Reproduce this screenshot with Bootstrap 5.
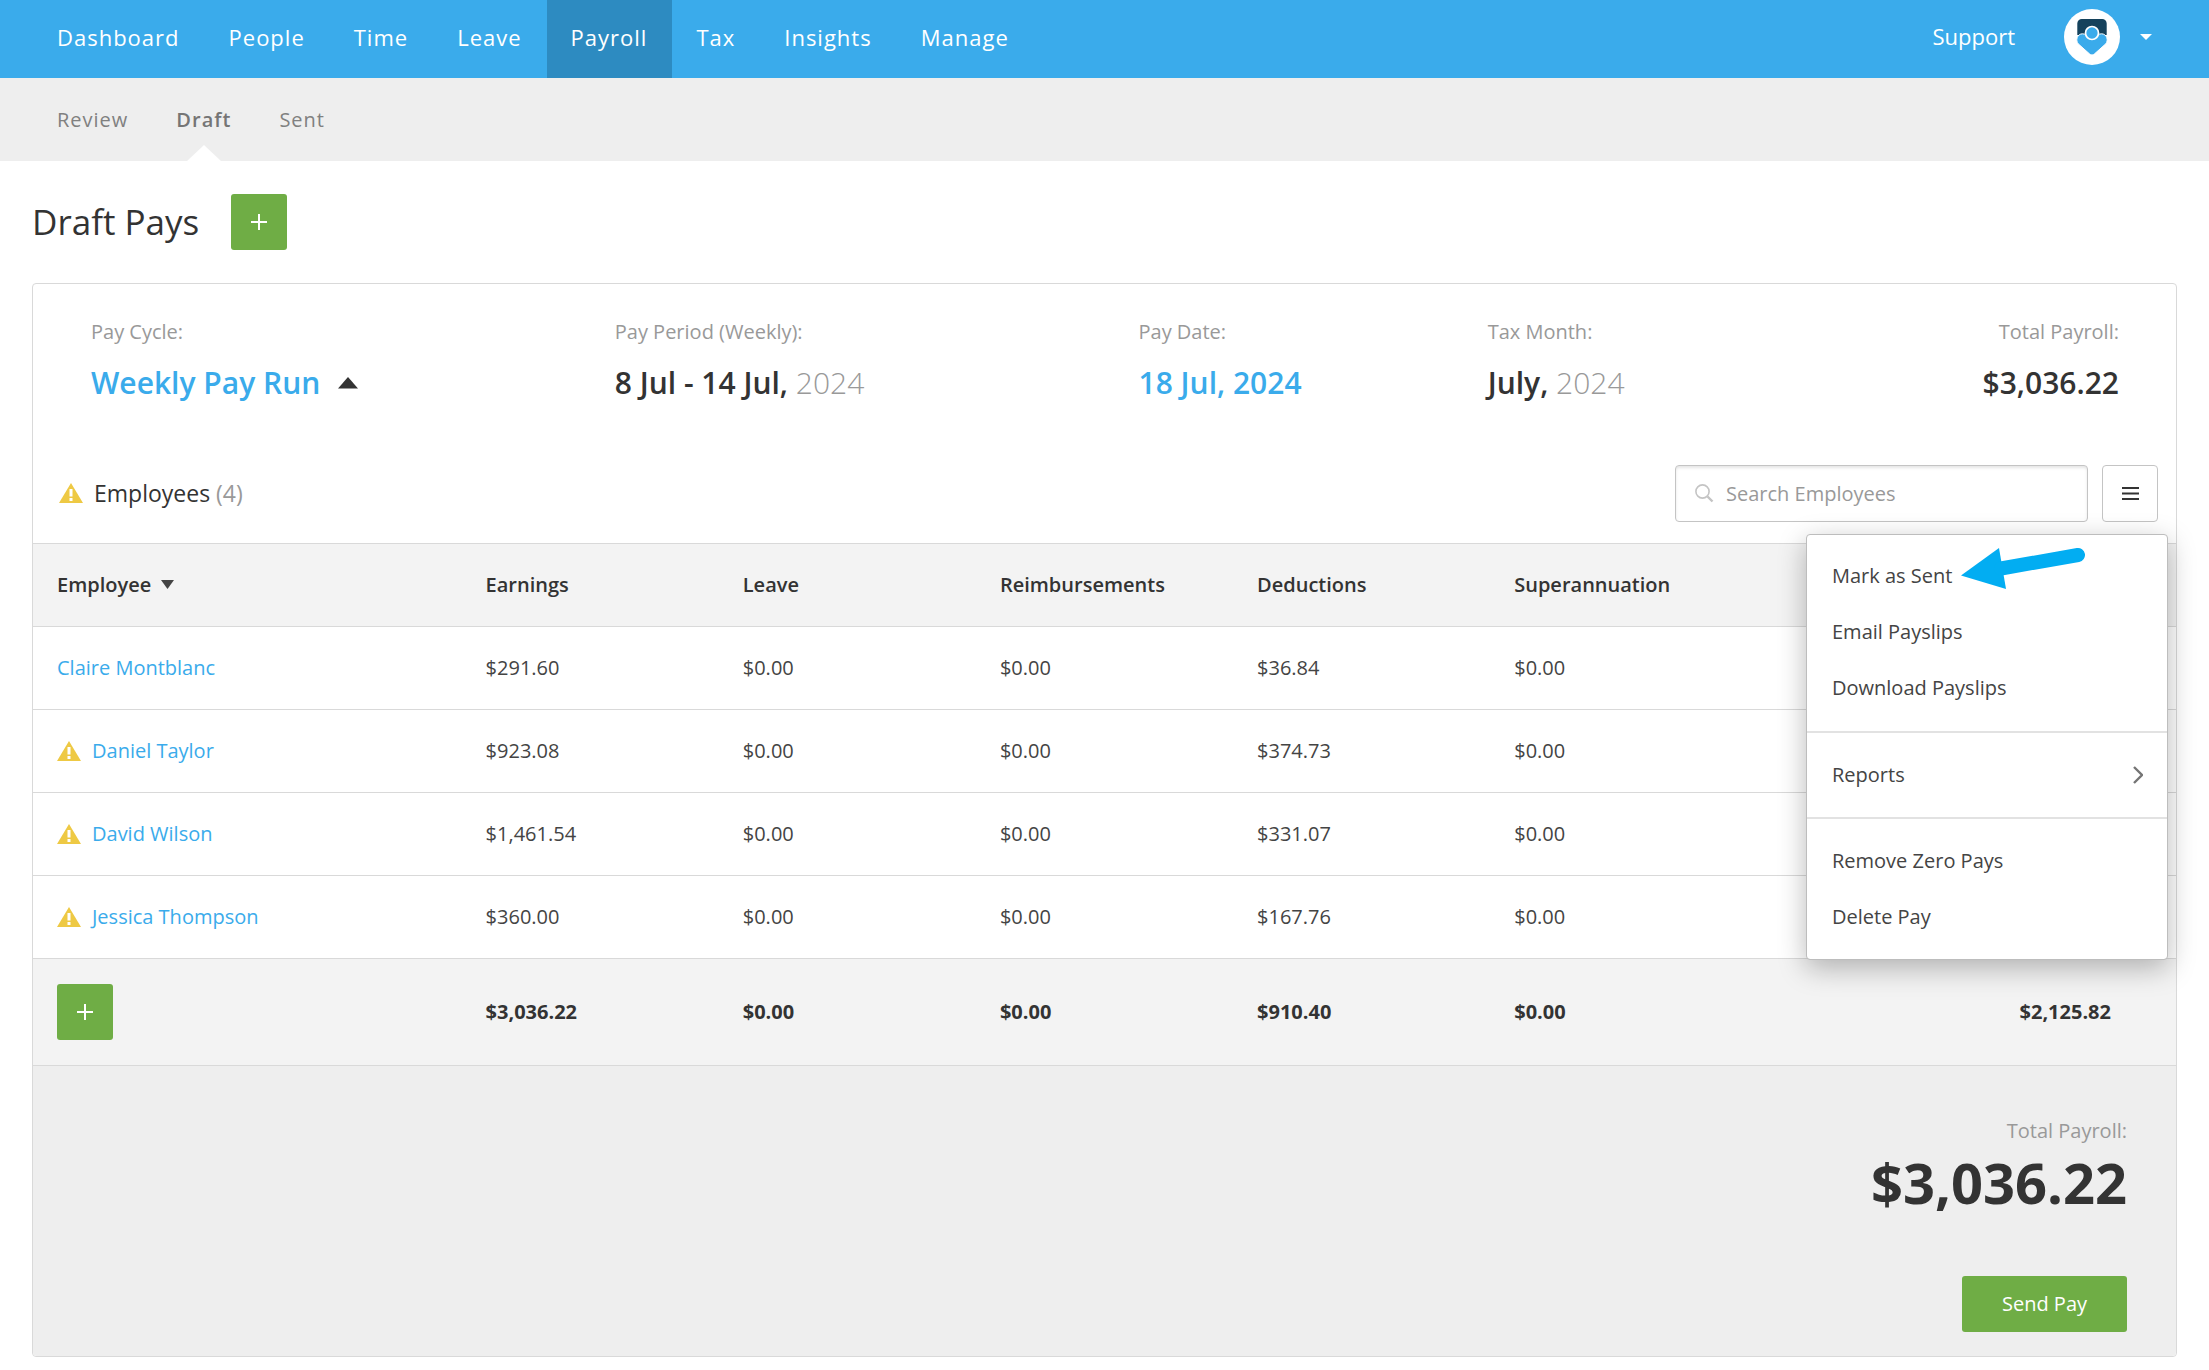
<!DOCTYPE html>
<html lang="en">
<head>
<meta charset="utf-8">
<meta name="viewport" content="width=device-width, initial-scale=1">
<title>Draft Pays</title>
<link href="https://cdn.jsdelivr.net/npm/bootstrap@5.3.0/dist/css/bootstrap.min.css" rel="stylesheet">
<style>
  :root { --sky: #3aabeb; --leaf: #6fad45; --ink: #333; --line: #d9d9d9; --soft: #999; }
  body { font-family: "Open Sans", "Noto Sans", sans-serif; font-size: 20px; line-height: 28px; color: var(--ink); background: #fff; }
  a { color: var(--sky); text-decoration: none; }
  .topbar { background: var(--sky); height: 78px; padding: 0 57px 0 33px; }
  .topbar .nav-link { color: #fff; font-size: 22px; letter-spacing: 1px; padding: 23px 25px 27px 24px; }
  .topbar .nav-link.active { background: #2d8bc1; }
  .topbar .support { color: #fff; font-size: 22px; margin-right: 49px; padding-bottom: 2px; }
  .avatar { width: 56px; height: 56px; }
  .user-toggle { gap: 20px; }
  .subbar { background: #eee; padding: 0 33px; }
  .subbar .nav-link { color: #808080; letter-spacing: 1px; padding: 28px 24px 27px; position: relative; }
  .subbar .nav-link.active { font-weight: 600; color: #757575; }
  .subbar .nav-link.active::after { content: ""; position: absolute; bottom: 0; left: 50%; margin-left: -17px; border: 17px solid transparent; border-top: 0; border-bottom: 16px solid #fff; }
  .page-main { padding: 33px 32px 13px; }
  .title-row { gap: 32px; }
  .page-title { font-size: 35px; line-height: 56px; font-weight: 400; }
  .btn-leaf, .btn-leaf:hover { background: var(--leaf); color: #fff; border: 0; border-radius: 3px; height: 56px; font-size: 20px; line-height: 28px; }
  .btn-plus { width: 56px; }
  .pay-card { border: 1px solid var(--line); border-radius: 4px; margin-top: 33px; }
  .pay-info { padding: 34px 24px 40px; }
  .pay-info .info-cell { padding: 0 33px 0 34px; }
  .label-soft { color: var(--soft); }
  .info-value { font-size: 30px; line-height: 42px; font-weight: 600; margin-top: 16px; }
  .info-value .year { font-weight: 300; color: var(--soft); }
  .info-value svg { margin-left: 18px; }
  .tools { padding: 21px 18px 21px 26px; gap: 14px; }
  .tools h2 { font-size: 23px; line-height: 32px; font-weight: 400; gap: 11px; padding-bottom: 2px; }
  .search-box { width: 413px; }
  .search-box input { height: 57px; border: 1px solid #c4c4c4; border-radius: 4px; padding: 0 16px 0 50px; font-size: 20px; box-shadow: inset 0 2px 3px rgba(0,0,0,.1); }
  .search-box input::placeholder { color: var(--soft); opacity: 1; }
  .search-box svg { left: 20px; top: 19px; }
  .btn-menu { width: 56px; height: 57px; border: 1px solid #c4c4c4; border-radius: 4px; background: #fff; }
  .action-menu { width: 362px; top: 69px; right: -10px; border: 1px solid #bdbdbd; border-radius: 4px; padding: 0; box-shadow: 0 8px 28px rgba(0,0,0,.28); font-size: 20px; }
  .menu-part { padding: 13px 0 15px; }
  .menu-part + .menu-part { border-top: 2px solid #e2e2e2; padding: 14px 0; }
  .action-menu .dropdown-item { color: #444; padding: 14px 24px 14px 25px; line-height: 28px; }
  .pointer { left: 154px; top: 11px; pointer-events: none; }
  .pay-table { --bs-table-color: var(--ink); margin: 0; table-layout: fixed; border-color: var(--line); }
  .pay-table > :not(caption) > * > * { padding: 27px 24px; border-bottom: 1px solid var(--line); vertical-align: middle; line-height: 28px; }
  .pay-table > thead > tr > th { background: #f3f3f3; border-top: 1px solid var(--line); font-weight: 600; }
  .pay-table > tbody > tr > td { color: #444; }
  .pay-table > tfoot > tr > td { background: #f3f3f3; font-weight: 700; padding-top: 25px; padding-bottom: 25px; }
  .pay-table > tfoot > tr > td:last-child { text-align: right; padding-right: 65px; }
  .c-name { width: 20%; } .c-sum { width: 12%; }
  .sort-mark { margin: 0 0 3px 5px; }
  .warned { gap: 11px; }
  .summary { background: #eee; padding: 51px 49px 24px; border-radius: 0 0 4px 4px; }
  .grand-total { font-size: 56px; line-height: 64px; font-weight: 700; margin: 5px 0 62px; }
  .btn-send { width: 165px; font-weight: 500; }
</style>
</head>
<body>
<svg class="d-none" aria-hidden="true">
  <symbol id="warn" viewBox="0 0 24 20"><path d="M12 0 24 20H0z" fill="#eec944"/><path d="M10.500 6h3v7.500h-3zM10.500 15h3v3h-3z" fill="#fff"/></symbol>
  <symbol id="plus" viewBox="0 0 16 16"><path d="M8 0v16M0 8h16" stroke="#fff" stroke-width="2" fill="none"/></symbol>
</svg>

<header class="topbar d-flex align-items-center justify-content-between">
  <nav class="nav" aria-label="Main">
    <a class="nav-link" href="#">Dashboard</a>
    <a class="nav-link" href="#">People</a>
    <a class="nav-link" href="#">Time</a>
    <a class="nav-link" href="#">Leave</a>
    <a class="nav-link active" href="#" aria-current="page">Payroll</a>
    <a class="nav-link" href="#">Tax</a>
    <a class="nav-link" href="#">Insights</a>
    <a class="nav-link" href="#">Manage</a>
  </nav>
  <div class="d-flex align-items-center pb-1">
    <a class="support" href="#">Support</a>
    <button class="user-toggle btn p-0 border-0 d-flex align-items-center" type="button" aria-label="Account menu">
      <svg class="avatar" viewBox="0 0 56 56" aria-hidden="true">
        <circle cx="28" cy="28" r="28" fill="#fff"/>
        <path d="M13.300 26V14.500a4.500 4.500 0 0 1 4.500-4.500h20.400a4.500 4.500 0 0 1 4.500 4.500V26z" fill="#15425c"/>
        <path d="M14.200 34.800c-2.800-3.200-1.300-9.900 4.300-10 3.200 0 5.500 2.200 9.500 5 4-2.800 6.300-5 9.500-5 5.600.1 7.100 6.800 4.300 10L30.600 44.800c-1.700 1.600-3.500 1.600-5.200 0z" fill="#3aabeb" stroke="#fff" stroke-width="1"/>
        <circle cx="28" cy="24" r="6.500" fill="#3aabeb" stroke="#fff" stroke-width="1.700"/>
      </svg>
      <svg width="12" height="6" viewBox="0 0 12 6" aria-hidden="true"><path d="M0 0h12L6 6z" fill="#fff"/></svg>
    </button>
  </div>
</header>

<nav class="subbar nav" aria-label="Payroll">
  <a class="nav-link" href="#">Review</a>
  <a class="nav-link active" href="#" aria-current="page">Draft</a>
  <a class="nav-link" href="#">Sent</a>
</nav>

<main class="page-main">
  <div class="title-row d-flex align-items-center">
    <h1 class="page-title mb-0">Draft Pays</h1>
    <button class="btn btn-leaf btn-plus p-0" type="button" aria-label="Add pay"><svg width="16" height="16" class="d-block mx-auto"><use href="#plus"/></svg></button>
  </div>

  <section class="pay-card">
    <div class="pay-info">
      <div class="row gx-0">
        <div class="col-3 info-cell"><div class="label-soft">Pay Cycle:</div>
          <div class="info-value d-flex align-items-center"><a href="#">Weekly Pay Run</a><svg width="20" height="12" viewBox="0 0 20 12" aria-hidden="true"><path d="M10 0 20 11.500H0z" fill="#333"/></svg></div></div>
        <div class="col-3 info-cell"><div class="label-soft">Pay Period (Weekly):</div>
          <div class="info-value">8 Jul - 14 Jul, <span class="year">2024</span></div></div>
        <div class="col-2 info-cell"><div class="label-soft">Pay Date:</div>
          <div class="info-value"><a href="#">18 Jul, 2024</a></div></div>
        <div class="col-2 info-cell"><div class="label-soft">Tax Month:</div>
          <div class="info-value">July, <span class="year">2024</span></div></div>
        <div class="col-2 info-cell text-end"><div class="label-soft">Total Payroll:</div>
          <div class="info-value">$3,036.22</div></div>
      </div>
    </div>

    <div class="tools d-flex align-items-center">
      <h2 class="d-flex align-items-center mb-0 me-auto"><svg width="24" height="20" aria-hidden="true"><use href="#warn"/></svg><span>Employees <span class="label-soft">(4)</span></span></h2>
      <div class="search-box position-relative">
        <svg class="position-absolute" width="19" height="19" viewBox="0 0 19 19" fill="none" stroke="#c4c4c4" aria-hidden="true"><circle cx="7.500" cy="7.500" r="6.600" stroke-width="1.600"/><path d="m12.500 12.500 5 5" stroke-width="2.400"/></svg>
        <input class="form-control" type="text" placeholder="Search Employees" aria-label="Search Employees">
      </div>
      <div class="position-relative">
        <button class="btn-menu d-block p-0" type="button" aria-label="Actions" aria-expanded="true"><svg width="17" height="13" viewBox="0 0 17 13" class="d-block mx-auto" stroke="#333" stroke-width="2" aria-hidden="true"><path d="M0 1h17M0 6.500h17M0 12h17"/></svg></button>
        <div class="action-menu dropdown-menu show">
          <div class="menu-part">
            <a class="dropdown-item" href="#">Mark as Sent</a>
            <a class="dropdown-item" href="#">Email Payslips</a>
            <a class="dropdown-item" href="#">Download Payslips</a>
          </div>
          <div class="menu-part">
            <a class="dropdown-item d-flex align-items-center justify-content-between" href="#">Reports<svg width="10" height="18" viewBox="0 0 10 18" fill="none" stroke="#757575" stroke-width="2.400" aria-hidden="true"><path d="m1 1 8 8-8 8"/></svg></a>
          </div>
          <div class="menu-part">
            <a class="dropdown-item" href="#">Remove Zero Pays</a>
            <a class="dropdown-item" href="#">Delete Pay</a>
          </div>
          <svg class="pointer position-absolute" width="126" height="44" viewBox="0 0 126 44" aria-hidden="true"><path d="M0 29.500 38 2l7 41z" fill="#02adf2"/><path d="m40 22.500 77-13.500" stroke="#02adf2" stroke-width="14" stroke-linecap="round"/></svg>
        </div>
      </div>
    </div>

    <table class="table pay-table">
      <colgroup><col class="c-name"><col class="c-sum"><col class="c-sum"><col class="c-sum"><col class="c-sum"><col class="c-sum"><col></colgroup>
      <thead>
        <tr><th scope="col">Employee <svg width="13" height="9" viewBox="0 0 13 9" class="sort-mark align-baseline" aria-hidden="true"><path d="M0 0h13L6.500 9z" fill="#444"/></svg></th><th scope="col">Earnings</th><th scope="col">Leave</th><th scope="col">Reimbursements</th><th scope="col">Deductions</th><th scope="col">Superannuation</th><th></th></tr>
      </thead>
      <tbody>
        <tr><td><a href="#">Claire Montblanc</a></td><td>$291.60</td><td>$0.00</td><td>$0.00</td><td>$36.84</td><td>$0.00</td><td></td></tr>
        <tr><td><div class="warned d-flex align-items-center"><svg width="24" height="20" aria-hidden="true"><use href="#warn"/></svg><a href="#">Daniel Taylor</a></div></td><td>$923.08</td><td>$0.00</td><td>$0.00</td><td>$374.73</td><td>$0.00</td><td></td></tr>
        <tr><td><div class="warned d-flex align-items-center"><svg width="24" height="20" aria-hidden="true"><use href="#warn"/></svg><a href="#">David Wilson</a></div></td><td>$1,461.54</td><td>$0.00</td><td>$0.00</td><td>$331.07</td><td>$0.00</td><td></td></tr>
        <tr><td><div class="warned d-flex align-items-center"><svg width="24" height="20" aria-hidden="true"><use href="#warn"/></svg><a href="#">Jessica Thompson</a></div></td><td>$360.00</td><td>$0.00</td><td>$0.00</td><td>$167.76</td><td>$0.00</td><td></td></tr>
      </tbody>
      <tfoot>
        <tr><td><button class="btn btn-leaf btn-plus p-0 d-block" type="button" aria-label="Add employee"><svg width="16" height="16" class="d-block mx-auto"><use href="#plus"/></svg></button></td><td>$3,036.22</td><td>$0.00</td><td>$0.00</td><td>$910.40</td><td>$0.00</td><td>$2,125.82</td></tr>
      </tfoot>
    </table>

    <div class="summary text-end">
      <div class="label-soft">Total Payroll:</div>
      <div class="grand-total">$3,036.22</div>
      <button class="btn btn-leaf btn-send" type="button">Send Pay</button>
    </div>
  </section>
</main>
<script src="https://cdn.jsdelivr.net/npm/bootstrap@5.3.0/dist/js/bootstrap.bundle.min.js"></script>
</body>
</html>
